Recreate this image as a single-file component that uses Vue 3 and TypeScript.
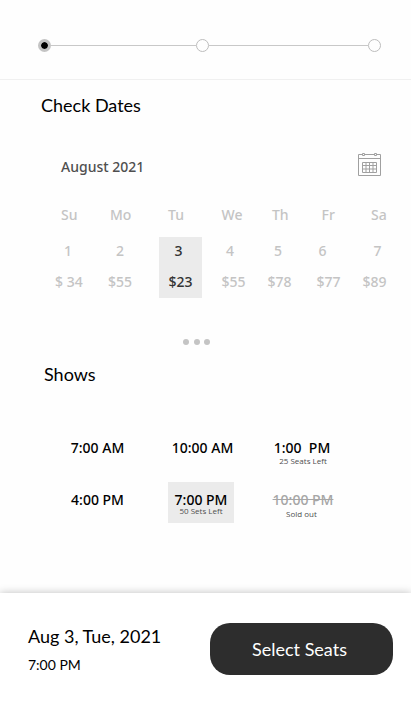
<script setup lang="ts">
interface Show {
  time: string
  note?: string
  state?: 'selected' | 'sold'
}

const weekdays: string[] = ['Su', 'Mo', 'Tu', 'We', 'Th', 'Fr', 'Sa']
const dates: string[] = ['1', '2', '3', '4', '5', '6', '7']
const prices: string[] = ['$ 34', '$55', '$23', '$55', '$78', '$77', '$89']
const selectedIndex = 2

const shows: Show[] = [
  { time: '7:00 AM' },
  { time: '10:00 AM' },
  { time: '1:00  PM', note: '25 Seats Left' },
  { time: '4:00 PM' },
  { time: '7:00 PM', note: '50 Sets Left', state: 'selected' },
  { time: '10:00 PM', note: 'Sold out', state: 'sold' },
]
</script>

<template>
  <main class="screen">
    <header class="steps">
      <span class="step active"></span>
      <span class="line first"></span>
      <span class="step"></span>
      <span class="line"></span>
      <span class="step"></span>
    </header>

    <section class="dates">
      <h1 class="heading">Check Dates</h1>
      <div class="month">
        <span class="month-name">August 2021</span>
        <svg class="calendar-icon" width="24" height="26" viewBox="0 0 24 26" fill="none" stroke="#a0a0a0">
          <path d="M4 2.5H0.5V23.5H22.5V2.5H19M7 2.5H16M0.5 6.5H22.5" />
          <path d="M4.5 1.5H6.5V3.5H4.5ZM16.5 1.5H18.5V3.5H16.5Z" />
          <path d="M4.5 10.5H18.5V20.5H4.5ZM4.5 13.5H18.5M4.5 17H18.5M8 10.5V20.5M11.5 10.5V20.5M15 10.5V20.5" />
        </svg>
      </div>
      <div class="calendar">
        <div class="highlight"></div>
        <div class="row weekdays">
          <span v-for="day in weekdays" :key="day">{{ day }}</span>
        </div>
        <div class="row numbers">
          <span v-for="(date, i) in dates" :key="date" :class="{ chosen: i === selectedIndex }">{{ date }}</span>
        </div>
        <div class="row prices">
          <span v-for="(price, i) in prices" :key="i" :class="{ chosen: i === selectedIndex }">{{ price }}</span>
        </div>
      </div>
      <div class="dots"><i></i><i></i><i></i></div>
    </section>

    <section class="shows">
      <h2 class="heading">Shows</h2>
      <div class="show-grid">
        <div v-for="show in shows" :key="show.time" class="show" :class="show.state">
          <span class="time">{{ show.time }}</span>
          <span v-if="show.note" class="note">{{ show.note }}</span>
        </div>
      </div>
    </section>

    <footer class="summary">
      <div class="choice">
        <div class="choice-date">Aug 3, Tue, 2021</div>
        <div class="choice-time">7:00 PM</div>
      </div>
      <button class="select" type="button">Select Seats</button>
    </footer>
  </main>
</template>

<style>
body {
  margin: 0;
  background: #fefefe;
}
</style>

<style scoped>
.screen {
  display: flex;
  flex-direction: column;
  width: 411px;
  height: 704px;
  overflow: hidden;
  box-sizing: border-box;
  background: #fefefe;
  font-family: 'Noto Sans', 'Open Sans', sans-serif;
  color: #000;
}

.steps {
  display: flex;
  align-items: center;
  height: 80px;
  padding: 12px 30px 0 38px;
  box-sizing: border-box;
  border-bottom: 1px solid #f0f0f0;
  flex: none;
}

.step {
  width: 13px;
  height: 13px;
  box-sizing: border-box;
  border: 1px solid #bdbdbd;
  border-radius: 50%;
  flex: none;
}

.step.active {
  border: 3px solid #c4c4c4;
  background: #000;
  background-clip: padding-box;
}

.line {
  flex: 159 1 0;
  height: 1px;
  background: #c8c8c8;
}

.line.first {
  flex-grow: 145;
}

.heading {
  margin: 0;
  font: 400 18px/22px Lato, sans-serif;
}

.dates {
  height: 283px;
  padding-top: 14px;
  box-sizing: border-box;
  flex: none;
}

.dates .heading {
  padding-left: 41px;
}

.month {
  display: flex;
  justify-content: space-between;
  align-items: flex-start;
  height: 26px;
  margin-top: 35px;
  padding: 0 29px 0 61px;
}

.month-name {
  margin-top: 6px;
  font-size: 14px;
  line-height: 20px;
  font-weight: 500;
  color: #4f4f4f;
}

.calendar-icon {
  margin-top: 1px;
}

.calendar {
  display: grid;
  grid-template-rows: 32px 33px 28px;
  margin-top: 28px;
  color: #c4c4c4;
  font-size: 14px;
  line-height: 20px;
  font-weight: 500;
}

.highlight {
  grid-area: 2 / 1 / 4 / 2;
  width: 43px;
  margin-left: 159px;
  background: #ebebeb;
}

.row {
  display: grid;
  white-space: nowrap;
}

.weekdays {
  grid-area: 1 / 1;
  grid-template-columns: 49px 58px 53.5px 50.5px 49.5px 49.5px 40px;
  padding-left: 61px;
}

.numbers {
  grid-area: 2 / 1;
  grid-template-columns: 52px 58.5px 51.5px 48px 44.5px 55px 37px;
  padding: 4px 0 0 64px;
}

.prices {
  grid-area: 3 / 1;
  grid-template-columns: 53px 60.5px 53px 46px 49px 46px 48px;
  padding: 2px 0 0 55px;
}

.chosen {
  color: #333;
}

.dots {
  display: flex;
  gap: 4.5px;
  margin: 41px 0 0 183px;
}

.dots i {
  width: 6px;
  height: 6px;
  border-radius: 50%;
  background: #c4c4c4;
}

.shows {
  flex: 1;
}

.shows .heading {
  padding-left: 44px;
}

.show-grid {
  display: grid;
  grid-template-columns: 66px 66px 66px;
  grid-template-rows: 41px 41px;
  gap: 11px 36px;
  justify-content: start;
  margin: 45px 0 0 66px;
}

.show {
  display: flex;
  flex-direction: column;
  align-items: center;
  padding-top: 8px;
  white-space: pre;
}

.show:nth-child(3n + 1) {
  padding-right: 3px;
}

.show:nth-child(2) {
  padding-left: 3px;
}

.show:nth-child(3) .time {
  padding-right: 2px;
}

.time {
  font-size: 14px;
  line-height: 20px;
  font-weight: 500;
}

.note {
  margin-top: -3px;
  font-family: 'Open Sans', sans-serif;
  font-size: 8px;
  line-height: 11px;
  color: #4f4f4f;
}

.selected {
  background: #ebebeb;
}

.selected .note {
  margin-top: -5px;
}

.sold .time {
  color: #a6a6a6;
  text-decoration: line-through;
}

.sold .note {
  margin-top: -2px;
  padding-right: 3px;
}

.summary {
  display: flex;
  justify-content: space-between;
  height: 111px;
  padding: 30px 18px 0 28px;
  box-sizing: border-box;
  background: #fff;
  box-shadow: 0 0 8px rgba(0, 0, 0, 0.25);
  font-family: Lato, sans-serif;
  flex: none;
}

.choice-date {
  margin-top: 2px;
  font-size: 18px;
  line-height: 22px;
}

.choice-time {
  margin-top: 9px;
  font-size: 14px;
  line-height: 18px;
}

.select {
  width: 183px;
  height: 52px;
  padding: 0 4px 0 0;
  border: 0;
  border-radius: 20px;
  background: #2d2d2d;
  color: #fff;
  font: 400 18px/22px Lato, sans-serif;
}
</style>
